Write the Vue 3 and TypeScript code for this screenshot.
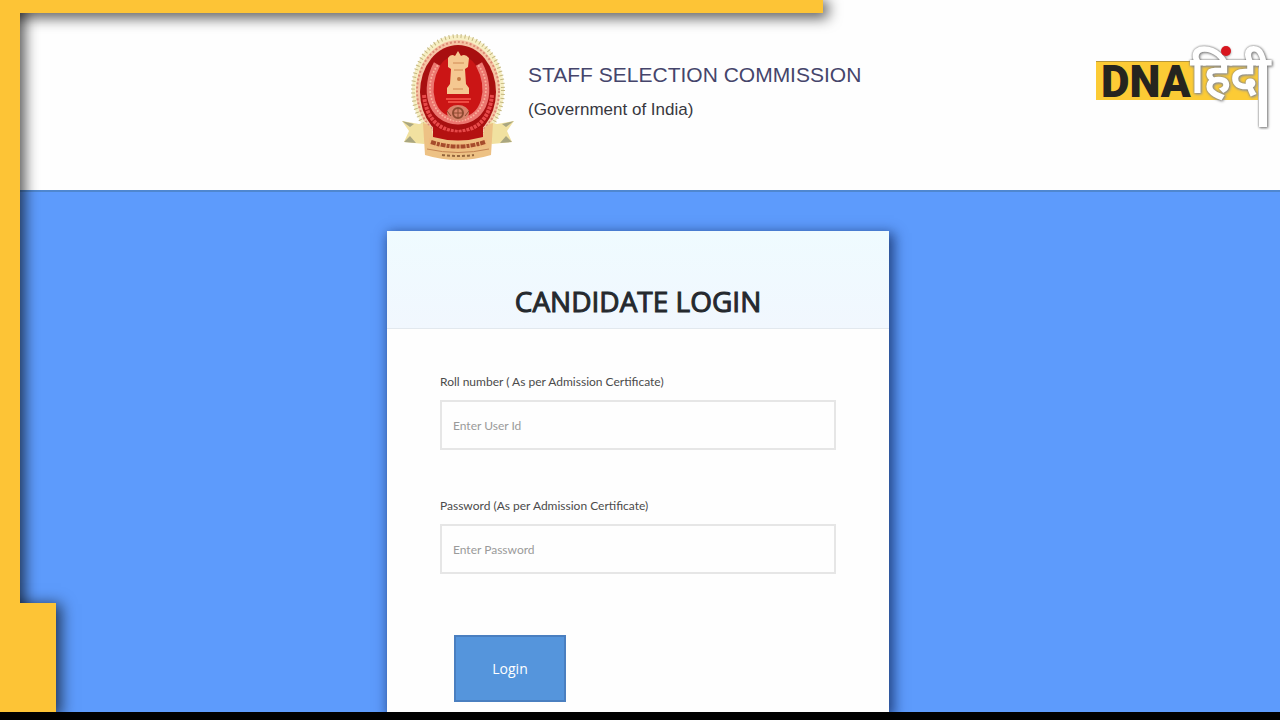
<script setup lang="ts">
import { ref } from 'vue'

const rollNumber = ref('')
const password = ref('')

// Beads of the laurel arcs in the emblem
const arc = (rx: number, ry: number, from: number, to: number, count: number) =>
  Array.from({ length: count }, (_, i) => {
    const a = ((from + ((to - from) * i) / (count - 1)) * Math.PI) / 180
    return { x: 56 + rx * Math.cos(a), y: 54 + ry * Math.sin(a) }
  })
const laurel = arc(28, 33, -42, 222, 44)
</script>

<template>
  <div class="page">
    <header class="top">
      <div class="brand">
        <svg class="emblem" viewBox="0 0 112 128" aria-hidden="true">
          <ellipse cx="56" cy="56" rx="46" ry="55" fill="#f7efc4" />
          <ellipse cx="56" cy="56" rx="45" ry="54" fill="none" stroke="#c3b67e" stroke-width="4" stroke-dasharray="1 3" />
          <ellipse cx="56" cy="57" rx="42" ry="51" fill="#f6c3a4" />
          <ellipse cx="56" cy="57" rx="41" ry="49" fill="none" stroke="#dc8a74" stroke-width="2" stroke-dasharray="2 2" />
          <ellipse cx="56" cy="58" rx="38" ry="47" fill="#a80f10" />
          <ellipse cx="56" cy="55" rx="25" ry="34" fill="#cb1515" />
          <path d="M35 30C22 54 27 86 56 87C85 86 90 54 77 30" fill="none" stroke="#ec7770" stroke-width="7" />
          <circle v-for="(p, i) in laurel" :key="i" :cx="p.x" :cy="p.y" r="1" fill="#fbb09b" />
          <path d="M22 61C24 84 36 96 56 98C76 96 88 84 90 61" fill="none" stroke="#e84a4a" stroke-width="4" stroke-dasharray="3 1" />
          <path d="M46 24Q49 19 53 22L56 17L59 22Q63 19 67 24L66 33L63 35L64 50L67 54V60H45V54L48 50L49 35L46 33Z" fill="#f5c891" />
          <path d="M51 29H62M52 36H61M51 55H61" stroke="#d08a55" stroke-width="1" />
          <circle cx="57" cy="45" r="2" fill="#c57b43" />
          <path d="M44 65H69M46 68H67" stroke="#ef4a42" stroke-width="2" />
          <ellipse cx="56" cy="79" rx="11" ry="8" fill="#d9826b" />
          <circle cx="56" cy="79" r="5" fill="none" stroke="#8e4a31" stroke-width="2" />
          <path d="M56 74V84M51 79H61M45 77L49 82M67 77L63 82" stroke="#8e4a31" stroke-width="1" />
          <path d="M24 88L17 90L0 87L7 97L2 108L22 110L28 106Z" fill="#f1e1a0" />
          <path d="M88 88L95 90L112 87L105 97L110 108L90 110L84 106Z" fill="#f1e1a0" />
          <path d="M0 87L12 90L8 93ZM2 108L14 109L8 102ZM112 87L100 90L104 93ZM110 108L98 109L104 102Z" fill="#a9a680" />
          <path d="M21 89Q30 90 31 101Q56 111 81 101Q82 90 91 89L89 121Q56 131 23 121Z" fill="#edc184" />
          <path d="M31 92Q56 105 81 92V103Q56 110 31 103Z" fill="#b41111" />
          <path d="M27 104Q56 115 85 104V112Q56 121 27 112Z" fill="#f0bd80" />
          <path d="M29 108Q56 117 83 108" fill="none" stroke="#a64c2c" stroke-width="4" stroke-dasharray="5 1 3 1" />
          <path d="M25 115Q56 122 87 115" fill="none" stroke="#c48352" stroke-width="1" />
          <path d="M40 121Q56 123 72 121" fill="none" stroke="#94663e" stroke-width="2" stroke-dasharray="3 2" />
        </svg>
        <div class="titles">
          <p class="org">STAFF SELECTION COMMISSION</p>
          <p class="gov">(Government of India)</p>
        </div>
      </div>
    </header>

    <main class="content">
      <section class="card">
        <h1 class="card-head">CANDIDATE LOGIN</h1>
        <form class="form" @submit.prevent>
          <div class="field">
            <label for="roll">Roll number ( As per Admission Certificate)</label>
            <input id="roll" v-model="rollNumber" type="text" placeholder="Enter User Id" />
          </div>
          <div class="field">
            <label for="pass">Password (As per Admission Certificate)</label>
            <input id="pass" v-model="password" type="password" placeholder="Enter Password" />
          </div>
          <button class="login" type="submit">Login</button>
        </form>
      </section>
    </main>
    <div class="base"></div>

    <div class="frame" aria-hidden="true">
      <div class="bar bar-left"></div>
      <div class="bar bar-foot"></div>
      <div class="bar bar-top"></div>
      <div class="join"></div>
    </div>

    <svg class="channel" viewBox="0 0 190 100" role="img" aria-label="DNA हिंदी">
      <rect x="6" y="32" width="162" height="38" fill="#fccb35" />
      <rect x="6" y="31" width="96" height="1" fill="#b9983a" />
      <text class="dna" x="11" y="67">DNA</text>
      <g class="raised">
        <text class="hindi" x="101" y="62">हिंदी</text>
        <rect x="169" y="32" width="8" height="65" fill="#ffffff" />
      </g>
      <circle cx="136" cy="21" r="5" fill="#d8171f" />
    </svg>
  </div>
</template>

<style>
body {
  margin: 0;
}
</style>

<style scoped>
* {
  box-sizing: border-box;
}
.page {
  position: relative;
  display: flex;
  flex-direction: column;
  min-height: 100vh;
  overflow: hidden;
  background: #5d9bfc;
  font-family: "Open Sans", "Noto Sans", sans-serif;
}
.top {
  display: flex;
  justify-content: center;
  padding: 34px 4px 28px 0;
  background: #fefefe;
  border-bottom: 2px solid #4f87cf;
}
.brand {
  display: flex;
  gap: 14px;
  width: 502px;
  padding-left: 15px;
}
.emblem {
  width: 112px;
  height: 128px;
}
.titles {
  padding-top: 24px;
  font-family: "Liberation Sans", Arial, sans-serif;
  white-space: nowrap;
}
.org,
.gov {
  margin: 0;
}
.org {
  font-size: 21px;
  line-height: 34px;
  color: #45456b;
}
.gov {
  font-size: 17px;
  line-height: 36px;
  color: #38383f;
}
.content {
  display: flex;
  flex: 1;
  justify-content: center;
  padding: 39px 4px 0 0;
}
.card {
  width: 502px;
  background: #fefefe;
  box-shadow: 3px 4px 12px 2px rgba(10, 30, 80, 0.7);
}
.card-head {
  margin: 0;
  padding: 46px 0 3px;
  border-bottom: 1px solid #e2e8ee;
  background: linear-gradient(#effbff, #f1f7fe);
  color: #25292e;
  font-size: 28px;
  font-weight: 400;
  line-height: 48px;
  text-align: center;
  -webkit-text-stroke: 1px #25292e;
}
.form {
  display: flex;
  flex-direction: column;
  align-items: flex-start;
  padding: 43px 53px 10px;
}
.field {
  display: flex;
  flex-direction: column;
  gap: 8px;
  width: 100%;
  margin-bottom: 46px;
}
.field label {
  color: #4b4b4b;
  font-family: "Lato", sans-serif;
  font-size: 12px;
  line-height: 20px;
}
.field input {
  width: 100%;
  height: 50px;
  padding: 0 11px;
  border: 2px solid #e6e6e6;
  border-radius: 0;
  background: #fefefe;
  color: #333333;
  font: 12px "Lato", sans-serif;
}
.field input::placeholder {
  color: #9a9a9a;
  opacity: 1;
}
.login {
  width: 112px;
  height: 67px;
  margin: 15px 0 0 14px;
  border: 2px solid #4a7fc0;
  background: #5595dc;
  color: #ffffff;
  font: 14px "Open Sans", sans-serif;
}
.base {
  height: 8px;
  background: #000000;
  z-index: 2;
}
.frame {
  position: absolute;
  inset: 0 0 8px;
  overflow: hidden;
  pointer-events: none;
}
.bar,
.join {
  position: absolute;
  background: #fdc436;
}
.bar {
  box-shadow: 3px 3px 14px 2px rgba(0, 0, 0, 0.65);
}
.bar-left {
  top: 0;
  bottom: 0;
  left: 0;
  width: 20px;
}
.bar-top {
  top: 0;
  left: 0;
  width: 823px;
  max-width: 100%;
  height: 13px;
}
.bar-foot {
  bottom: 0;
  left: 0;
  width: 56px;
  height: 109px;
}
.join {
  top: 0;
  bottom: 0;
  left: 0;
  width: 20px;
}
.channel {
  position: absolute;
  top: 30px;
  right: 0;
  width: 190px;
  height: 100px;
}
.dna {
  fill: #25241f;
  font: 900 44px "Roboto", sans-serif;
}
.hindi {
  fill: #ffffff;
  stroke: #ffffff;
  stroke-width: 2px;
  font: 400 50px "Noto Sans Devanagari", "Noto Sans", sans-serif;
}
.raised {
  filter: drop-shadow(0 0 1px #777777) drop-shadow(1px 1px 1px #999999);
}
</style>
